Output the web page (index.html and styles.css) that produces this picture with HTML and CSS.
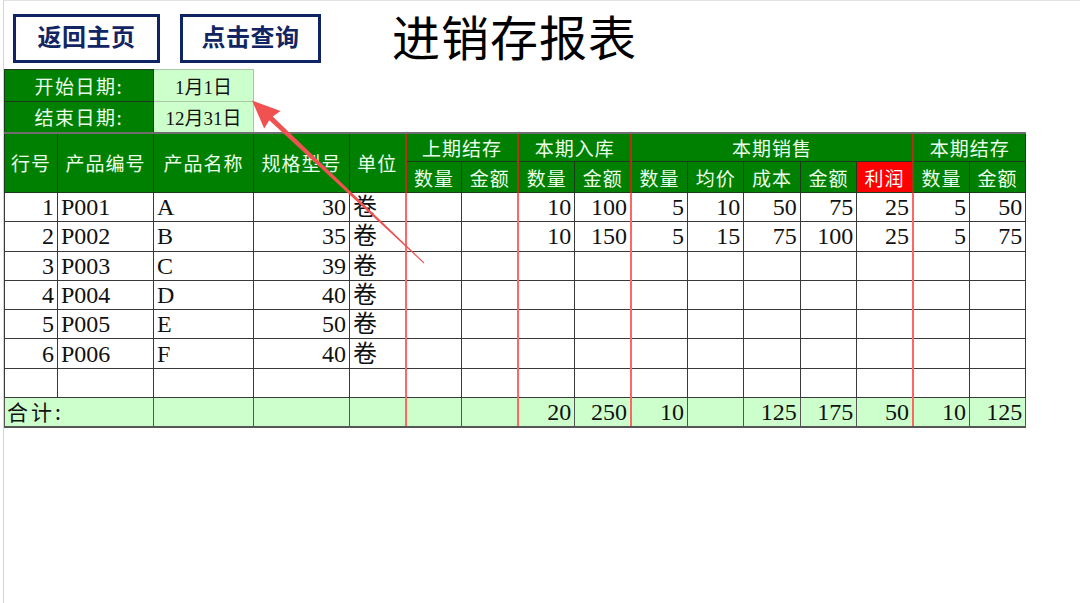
FILE: index.html
```html
<!DOCTYPE html>
<html lang="zh-CN">
<head>
<meta charset="UTF-8">
<title>进销存报表</title>
<link rel="stylesheet" href="styles.css">
</head>
<body>

<div class="sheet">
    <div class="topbar">
        <div class="btn btn-home">返回主页</div>
        <div class="btn btn-query">点击查询</div>
        <h1 class="title">进销存报表</h1>
    </div>

    <table class="report">
        <colgroup>
            <col class="c-no"><col class="c-code"><col class="c-name"><col class="c-spec"><col class="c-unit">
            <col class="c-n"><col class="c-n"><col class="c-n"><col class="c-n"><col class="c-n">
            <col class="c-n"><col class="c-n"><col class="c-n"><col class="c-n"><col class="c-n"><col class="c-n">
            <col class="c-pad">
        </colgroup>
        <tr class="row-date">
            <td class="date-label" colspan="2">开始日期:</td>
            <td class="date-value">1月1日</td>
            <td class="blank" colspan="14"></td>
        </tr>
        <tr class="row-date row-date2">
            <td class="date-label" colspan="2">结束日期:</td>
            <td class="date-value">12月31日</td>
            <td class="blank" colspan="14"></td>
        </tr>
        <tr class="row-head1">
            <th rowspan="2">行号</th>
            <th rowspan="2">产品编号</th>
            <th rowspan="2">产品名称</th>
            <th rowspan="2">规格型号</th>
            <th rowspan="2">单位</th>
            <th colspan="2" class="sep">上期结存</th>
            <th colspan="2" class="sep">本期入库</th>
            <th colspan="5" class="sep">本期销售</th>
            <th colspan="2" class="sep">本期结存</th>
            <td rowspan="2" class="pad"></td>
        </tr>
        <tr class="row-head2">
            <th class="sep">数量</th><th>金额</th>
            <th class="sep">数量</th><th>金额</th>
            <th class="sep">数量</th><th>均价</th><th>成本</th><th>金额</th><th class="profit">利润</th>
            <th class="sep">数量</th><th>金额</th>
        </tr>

        <tr class="row-data">
            <td class="num">1</td><td>P001</td><td>A</td><td class="num">30</td><td>卷</td>
            <td class="sep"></td><td></td>
            <td class="sep num">10</td><td class="num">100</td>
            <td class="sep num">5</td><td class="num">10</td><td class="num">50</td><td class="num">75</td><td class="num">25</td>
            <td class="sep num">5</td><td class="num">50</td><td class="pad"></td>
        </tr>
        <tr class="row-data">
            <td class="num">2</td><td>P002</td><td>B</td><td class="num">35</td><td>卷</td>
            <td class="sep"></td><td></td>
            <td class="sep num">10</td><td class="num">150</td>
            <td class="sep num">5</td><td class="num">15</td><td class="num">75</td><td class="num">100</td><td class="num">25</td>
            <td class="sep num">5</td><td class="num">75</td><td class="pad"></td>
        </tr>
        <tr class="row-data">
            <td class="num">3</td><td>P003</td><td>C</td><td class="num">39</td><td>卷</td>
            <td class="sep"></td><td></td><td class="sep"></td><td></td>
            <td class="sep"></td><td></td><td></td><td></td><td></td>
            <td class="sep"></td><td></td><td class="pad"></td>
        </tr>
        <tr class="row-data">
            <td class="num">4</td><td>P004</td><td>D</td><td class="num">40</td><td>卷</td>
            <td class="sep"></td><td></td><td class="sep"></td><td></td>
            <td class="sep"></td><td></td><td></td><td></td><td></td>
            <td class="sep"></td><td></td><td class="pad"></td>
        </tr>
        <tr class="row-data">
            <td class="num">5</td><td>P005</td><td>E</td><td class="num">50</td><td>卷</td>
            <td class="sep"></td><td></td><td class="sep"></td><td></td>
            <td class="sep"></td><td></td><td></td><td></td><td></td>
            <td class="sep"></td><td></td><td class="pad"></td>
        </tr>
        <tr class="row-data">
            <td class="num">6</td><td>P006</td><td>F</td><td class="num">40</td><td>卷</td>
            <td class="sep"></td><td></td><td class="sep"></td><td></td>
            <td class="sep"></td><td></td><td></td><td></td><td></td>
            <td class="sep"></td><td></td><td class="pad"></td>
        </tr>
        <tr class="row-data">
            <td></td><td></td><td></td><td></td><td></td>
            <td class="sep"></td><td></td><td class="sep"></td><td></td>
            <td class="sep"></td><td></td><td></td><td></td><td></td>
            <td class="sep"></td><td></td><td class="pad"></td>
        </tr>
        <tr class="row-total">
            <td colspan="2" class="total-label">合计:</td><td></td><td></td><td></td>
            <td class="sep"></td><td></td>
            <td class="sep num">20</td><td class="num">250</td>
            <td class="sep num">10</td><td></td><td class="num">125</td><td class="num">175</td><td class="num">50</td>
            <td class="sep num">10</td><td class="num">125</td><td class="pad"></td>
        </tr>
    </table>

    <svg class="arrow" width="1080" height="300" viewBox="0 0 1080 300">
        <path d="M248,99.5 L276.6,110 L268.7,115.6 L420.3,261.6 L419.7,262.4 L265.3,119.2 L260.2,127.4 Z" fill="#f05252"/>
    </svg>
</div>

</body>
</html>
```

FILE: styles.css
```css
* {
    box-sizing: border-box;
    margin: 0;
    padding: 0;
}

body {
    background: #fff;
    font-family: "Noto Sans CJK SC", sans-serif;
    overflow: hidden;
}

.sheet {
    position: relative;
    margin-left: 3px;
    border-left: 1px solid #d4d4d4;
    border-top: 1px solid #e2e2e2;
    height: 603px;
}

/* top buttons + title */
.topbar {
    display: flex;
    align-items: center;
    height: 68px;
    padding: 12px 0 6px 9px;
}

.btn {
    height: 49px;
    border: 3px solid #0f2462;
    background: #fff;
    color: #122563;
    font-weight: 700;
    font-size: 24px;
    line-height: 38px;
    text-align: center;
    letter-spacing: 0.5px;
}

.btn-home {
    width: 147px;
}

.btn-query {
    width: 141px;
    margin-left: 20px;
}

.title {
    margin-left: 71px;
    margin-top: -6px;
    font-size: 48px;
    font-weight: 400;
    color: #000;
    line-height: 49px;
    letter-spacing: 1px;
}

/* report table */
.report {
    border-collapse: collapse;
    table-layout: fixed;
    width: 1076px;
    font-size: 19px;
}

.c-no { width: 53px; }
.c-code { width: 96px; }
.c-name { width: 100px; }
.c-spec { width: 96px; }
.c-unit { width: 56px; }
.c-n { width: 56.4px; }
.c-pad { width: 54px; }

.report td, .report th {
    padding: 0 3px;
    white-space: nowrap;
    overflow: hidden;
}

.row-date td {
    height: 32px;
}

.row-date2 td {
    height: 31px;
}

.date-label {
    background: #008000;
    color: #eaffea;
    text-align: center;
    border: 1px solid #1d3a1d;
    letter-spacing: 1.5px;
}

.date-value {
    background: #ccffcc;
    color: #111;
    text-align: center;
    border: 1px solid #a8c8a8;
    font-family: "Liberation Serif", "Noto Sans CJK SC", serif;
    font-size: 19px;
}

.blank {
    border: none;
}

.report th {
    background: #008000;
    color: #eaffea;
    font-weight: 400;
    border: 1px solid #1b3b1b;
    letter-spacing: 1px;
}

.row-head1 th {
    height: 29px;
    border-top: 2px solid #6e6e6e;
}

.row-head2 th {
    height: 31px;
}

.report th.sep {
    border-left: 2px solid #b0301a;
}

.report th.profit {
    background: #ff0000;
    color: #fff;
}

.pad {
    border: none;
}

.row-head1 .pad {
    border-bottom: 1px solid #d8d8d8;
}

.row-data td, .row-total td {
    height: 29.3px;
    font-family: "Liberation Serif", "Noto Sans CJK SC", serif;
    font-size: 24px;
    color: #111;
    border: 1px solid #3a3a3a;
    line-height: 1;
}

.row-data td.sep, .row-total td.sep {
    border-left: 2px solid #ff6666;
}

.report td.num {
    text-align: right;
}

.report td.pad {
    border: none;
    background: transparent;
}

.row-total td {
    background: #ccffcc;
    border-bottom: 2px solid #3e4e3e;
    border-color: #555;
}

.report .total-label {
    font-family: "Noto Sans CJK SC", sans-serif;
    font-size: 21px;
    line-height: 1.2;
    letter-spacing: 3px;
    padding-left: 2px;
    overflow: visible;
}

.arrow {
    position: absolute;
    left: 0;
    top: 0;
    pointer-events: none;
}
```
